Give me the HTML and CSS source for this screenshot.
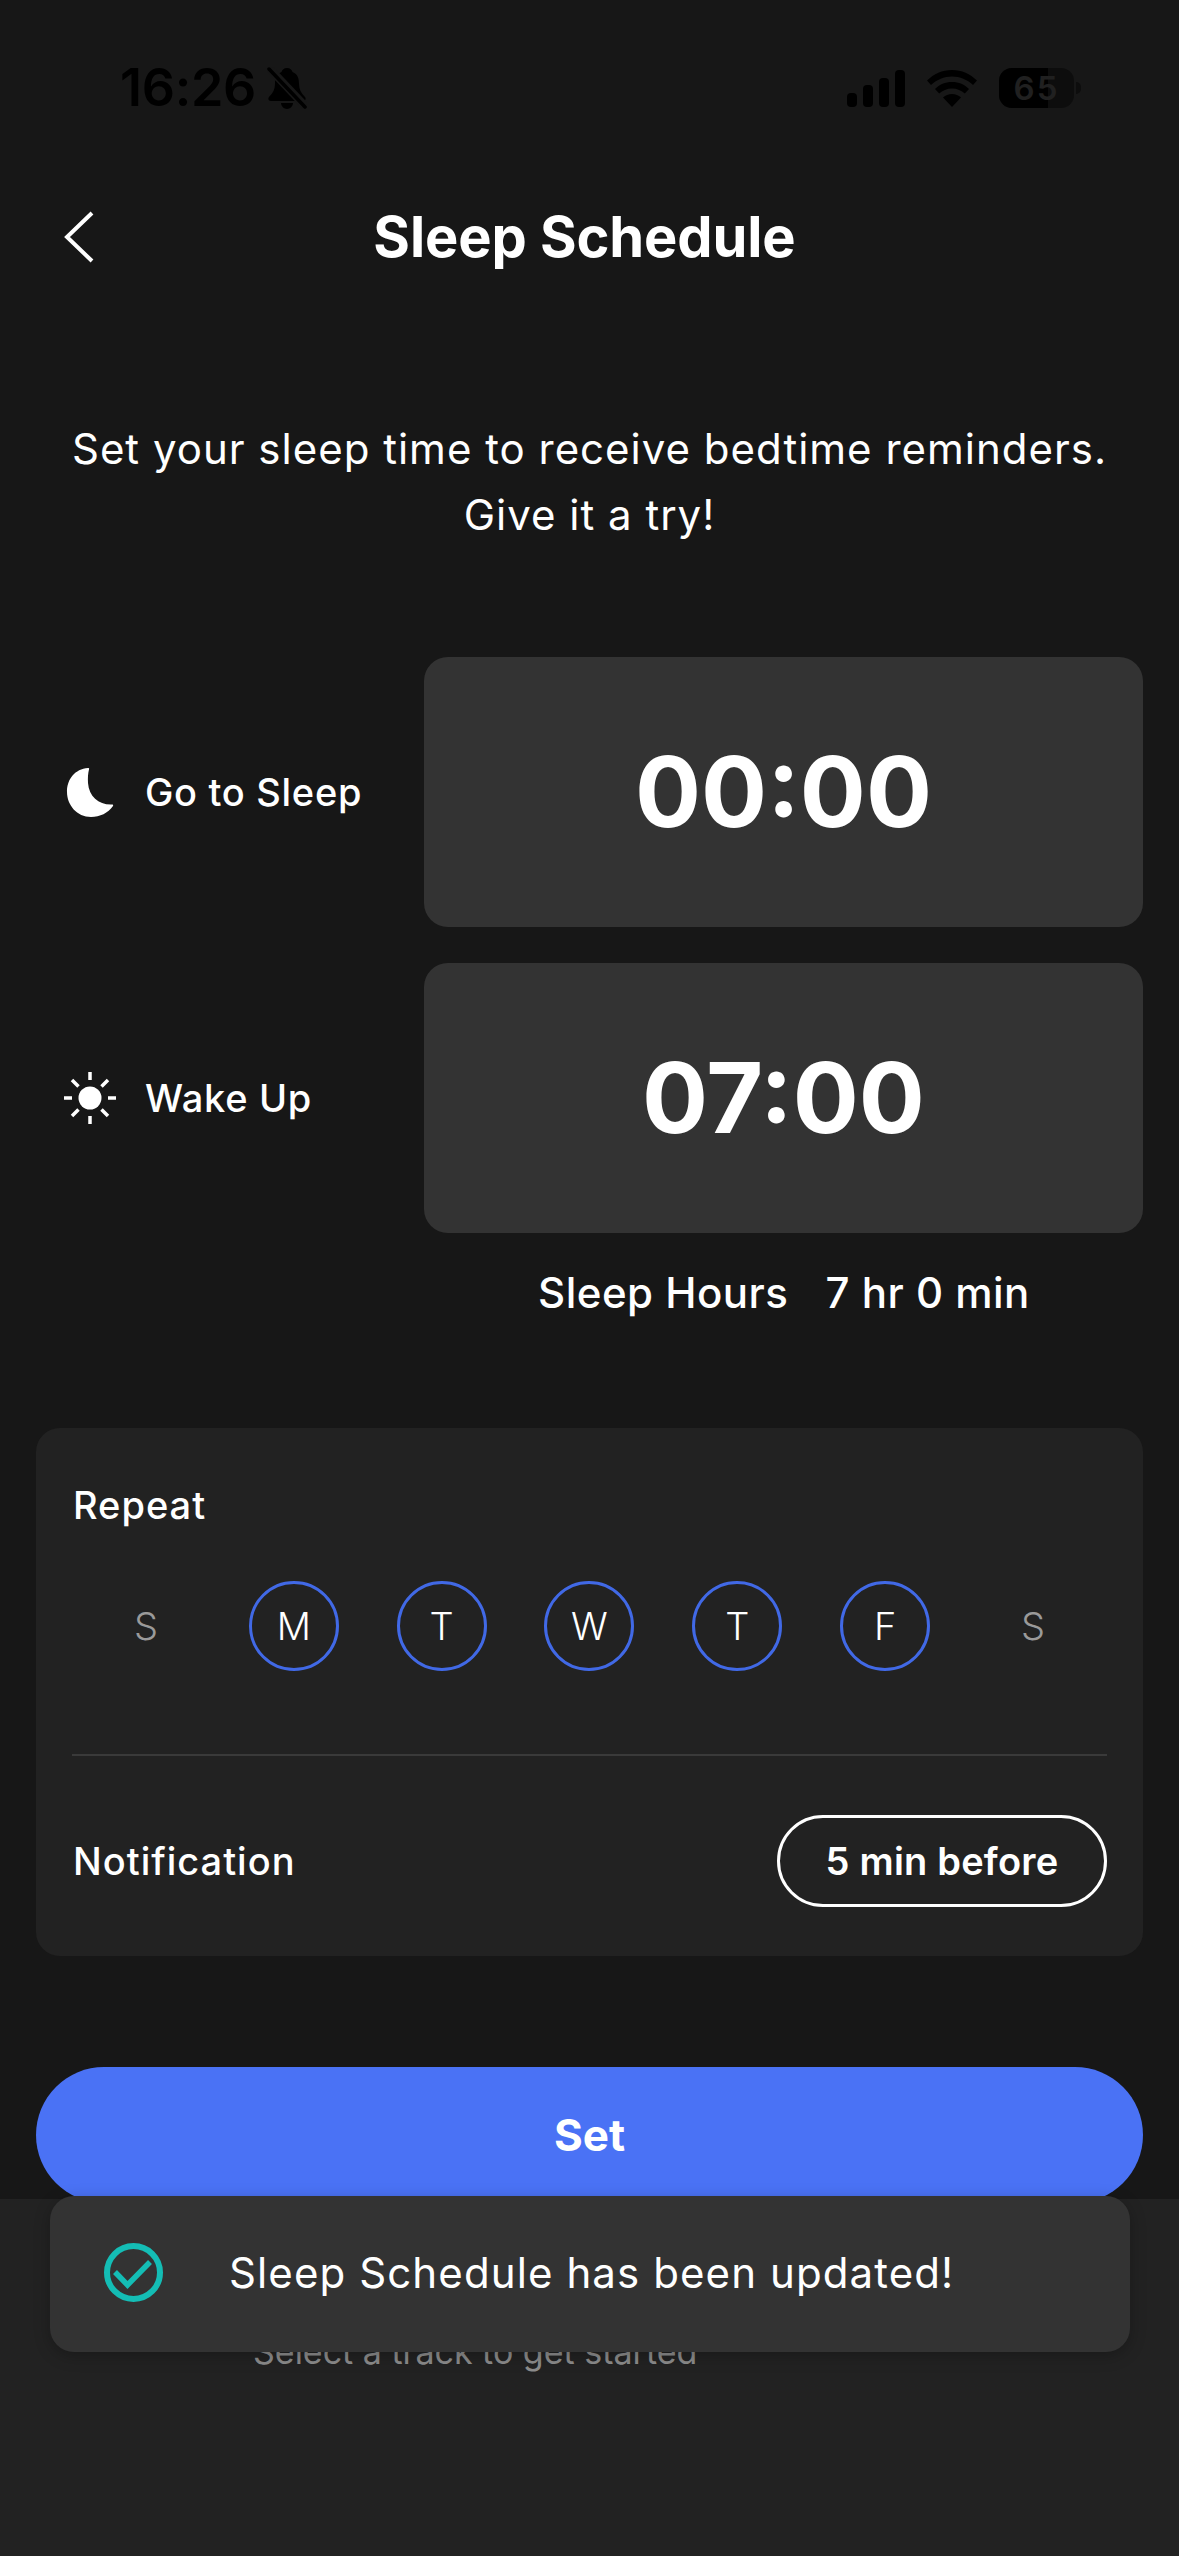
FILE: index.html
```html
<!DOCTYPE html>
<html lang="en">
<head>
    <meta charset="UTF-8">
    <meta name="viewport" content="width=device-width, initial-scale=1.0">
    <title>Sleep Schedule</title>
    <link rel="stylesheet" href="styles.css">
</head>
<body>
    <div class="app">
        <div class="status-bar">
            <div class="status-left">
                <span class="status-time">16:26</span>
                <svg class="bell" width="40" height="42" viewBox="0 0 40 42">
                    <path d="M20 1c-3 0-5 2-5.500 4C9 7 8 12 8 17c0 5-2 9-6 13-1 1-1 4 2 4h32c3 0 3-3 2-4-4-4-6-8-6-13 0-5-1-10-6.500-12C25 3 23 1 20 1z"/>
                    <path d="M14 36h12c0 3-3 6-6 6s-6-3-6-6z"/>
                    <path d="M3 2 38 39" stroke="#171717" stroke-width="8" fill="none"/>
                    <path d="M2 2 38 40" stroke="#000" stroke-width="3.500" stroke-linecap="round" fill="none"/>
                </svg>
            </div>
            <div class="status-right">
                <svg width="58" height="37" viewBox="0 0 58 37">
                    <rect x="0" y="23" width="10" height="14" rx="4"/>
                    <rect x="16" y="15" width="10" height="22" rx="4"/>
                    <rect x="32" y="8" width="10" height="29" rx="4"/>
                    <rect x="48" y="0" width="10" height="37" rx="4"/>
                </svg>
                <svg width="50" height="37" viewBox="0 0 50 37">
                    <path d="M25 0C15 0 7 4 0 10.500l4 4.500C10 9.500 17 6.500 25 6.500S40 9.500 46 15l4-4.500C43 4 35 0 25 0z"/>
                    <path d="M25 12c-7 0-12.500 2.500-17 7l4.200 4.500C15.500 20.500 20 18.500 25 18.500s9.500 2 12.800 5L42 19c-4.500-4.500-10-7-17-7z"/>
                    <path d="M25 24c-3.500 0-6.500 1.200-9 3.500L25 37l9-9.500C31.500 25.200 28.500 24 25 24z"/>
                </svg>
                <div class="battery">
                    <div class="battery-body">
                        <div class="battery-fill"></div>
                        <span class="battery-level">65</span>
                    </div>
                    <div class="battery-tip"></div>
                </div>
            </div>
        </div>

        <div class="header">
            <svg class="back" width="30" height="52" viewBox="0 0 30 52">
                <path d="M28 2 3 26l25 24" fill="none" stroke="#fff" stroke-width="4"/>
            </svg>
            <h1>Sleep Schedule</h1>
        </div>

        <p class="intro">Set your sleep time to receive bedtime reminders.<br>Give it a try!</p>

        <div class="time-rows">
            <div class="time-row">
                <div class="time-label">
                    <svg class="time-icon" width="52" height="52" viewBox="0 0 52 52">
                        <path d="M24 2C11 3 3 13 3 26c0 13 10 25 24 25 9 0 17-4 22-11 .500-1 0-1.500-1-1.500C35 39 25 31 24 17c-.300-5 0-10 1-13.500C25.500 2.500 25 2 24 2z" fill="#fff"/>
                    </svg>
                    <span>Go to Sleep</span>
                </div>
                <div class="time-card">00:00</div>
            </div>
            <div class="time-row">
                <div class="time-label">
                    <svg class="time-icon" width="52" height="52" viewBox="0 0 52 52">
                        <circle cx="26" cy="26" r="11.500" fill="#fff"/>
                        <path d="M26 0v8M26 44v8M0 26h8M44 26h8M8 8l6.500 6.500M37.500 37.500 44 44M8 44l6.500-6.500M37.500 14.500 44 8" stroke="#fff" stroke-width="3.500" fill="none"/>
                    </svg>
                    <span>Wake Up</span>
                </div>
                <div class="time-card">07:00</div>
            </div>
        </div>

        <div class="sleep-hours">
            <span>Sleep Hours</span>
            <span>7 hr 0 min</span>
        </div>

        <div class="settings">
            <div class="settings-title">Repeat</div>
            <div class="days">
                <div class="day">S</div>
                <div class="day active">M</div>
                <div class="day active">T</div>
                <div class="day active">W</div>
                <div class="day active">T</div>
                <div class="day active">F</div>
                <div class="day">S</div>
            </div>
            <div class="divider"></div>
            <div class="notify-row">
                <div class="settings-title">Notification</div>
                <div class="pill">5 min before</div>
            </div>
        </div>

        <button class="set-btn" type="button">Set</button>

        <div class="footer">
            <span class="footer-text">Select a track to get started</span>
        </div>

        <div class="toast">
            <svg width="59" height="59" viewBox="0 0 59 59">
                <circle cx="29.500" cy="29.500" r="26.500" fill="none" stroke="#14bdb5" stroke-width="6"/>
                <path d="M11 29l12.500 13L46 19" fill="none" stroke="#14bdb5" stroke-width="5.500"/>
            </svg>
            <span>Sleep Schedule has been updated!</span>
        </div>
    </div>
</body>
</html>
```

FILE: styles.css
```css
:root {
    --bg-color: #171717;
    --panel-color: #222222;
    --card-color: #333333;
    --primary-color: #4a72f5;
    --ring-color: #4169e6;
    --muted-color: #8c8c8c;
}

* {
    box-sizing: border-box;
    margin: 0;
    padding: 0;
    font-family: 'Inter', 'Liberation Sans', sans-serif;
}

body {
    background-color: var(--bg-color);
    color: #fff;
}

.app {
    width: 1179px;
    height: 2556px;
    display: flex;
    flex-direction: column;
    position: relative;
    overflow: hidden;
    background-color: var(--bg-color);
}

/* status bar is black on dark, it was captured that way */
.status-bar {
    height: 176px;
    flex-shrink: 0;
    display: flex;
    justify-content: space-between;
    align-items: center;
    padding: 0 98px 0 120px;
    color: #000;
}

.status-left {
    display: flex;
    align-items: center;
    gap: 11px;
}

.status-time {
    font-size: 52px;
    font-weight: 600;
    line-height: 52px;
    letter-spacing: -0.3px;
}

.status-right {
    display: flex;
    align-items: center;
    gap: 22px;
}

.battery {
    display: flex;
    align-items: center;
    gap: 2px;
}

.battery-body {
    width: 75px;
    height: 40px;
    border-radius: 13px;
    background: #0d0d0d;
    position: relative;
    overflow: hidden;
    display: flex;
    justify-content: center;
    align-items: center;
}

.battery-fill {
    position: absolute;
    left: 0;
    top: 0;
    bottom: 0;
    width: 49px;
    background: #000;
}

.battery-level {
    position: relative;
    font-size: 33px;
    font-weight: 600;
    letter-spacing: 2px;
    color: #202020;
}

.battery-tip {
    width: 5px;
    height: 12px;
    background: #0d0d0d;
    border-radius: 0 6px 6px 0;
}

.header {
    height: 122px;
    flex-shrink: 0;
    display: flex;
    align-items: center;
    justify-content: center;
    position: relative;
    padding-right: 10px;
}

.back {
    position: absolute;
    left: 64px;
    top: 35px;
}

h1 {
    font-size: 56px;
    font-weight: 700;
    line-height: 62px;
    letter-spacing: -0.1px;
}

.intro {
    margin-top: 118px;
    text-align: center;
    font-size: 42px;
    line-height: 66px;
    letter-spacing: 1px;
}

.time-rows {
    margin-top: 109px;
    display: flex;
    flex-direction: column;
    gap: 36px;
    padding: 0 36px 0 64px;
}

.time-row {
    display: flex;
    align-items: center;
}

.time-label {
    flex: 1;
    display: flex;
    align-items: center;
    gap: 29px;
    font-size: 38px;
    font-weight: 500;
    letter-spacing: 0.7px;
}

.time-card {
    width: 719px;
    height: 270px;
    padding-bottom: 2px;
    border-radius: 24px;
    background: var(--card-color);
    display: flex;
    justify-content: center;
    align-items: center;
    font-size: 98px;
    font-weight: 700;
}

.sleep-hours {
    margin-top: 36px;
    padding-left: 538px;
    display: flex;
    gap: 37px;
    font-size: 42px;
    font-weight: 500;
    line-height: 48px;
    letter-spacing: 0.5px;
}

.settings {
    margin: 111px 36px 0;
    padding: 54px 36px 49px;
    background: var(--panel-color);
    border-radius: 24px;
}

.settings-title {
    font-size: 38px;
    font-weight: 500;
    line-height: 46px;
    letter-spacing: 1px;
    margin-left: 1px;
}

.days {
    margin-top: 53px;
    display: grid;
    grid-template-columns: repeat(7, 1fr);
    justify-items: center;
}

.day {
    width: 90px;
    height: 90px;
    border-radius: 50%;
    display: flex;
    justify-content: center;
    align-items: center;
    font-size: 38px;
    font-weight: 300;
    color: #9a9a9a;
}

.day.active {
    border: 3.500px solid var(--ring-color);
    color: #fff;
}

.divider {
    margin-top: 83px;
    height: 2px;
    background: #3a3a3a;
}

.notify-row {
    margin-top: 59px;
    display: flex;
    justify-content: space-between;
    align-items: center;
}

.pill {
    width: 330px;
    height: 92px;
    border: 3px solid #fff;
    border-radius: 46px;
    display: flex;
    justify-content: center;
    align-items: center;
    font-size: 38px;
    font-weight: 600;
    letter-spacing: 0.2px;
}

.set-btn {
    margin: 111px 36px 0;
    height: 136px;
    flex-shrink: 0;
    border: none;
    border-radius: 68px;
    background: var(--primary-color);
    color: #fff;
    font-size: 44px;
    font-weight: 700;
}

.footer {
    flex: 1;
    margin-top: -4px;
    background: var(--panel-color);
    padding: 132px 0 0 253px;
}

.footer-text {
    font-size: 34px;
    line-height: 42px;
    color: var(--muted-color);
}

.toast {
    position: absolute;
    left: 50px;
    top: 2196px;
    width: 1080px;
    height: 156px;
    border-radius: 24px;
    background: var(--card-color);
    box-shadow: 0 4px 16px rgba(0, 0, 0, 0.25);
    display: flex;
    align-items: center;
    gap: 66px;
    padding: 0 0 4px 54px;
    font-size: 42px;
    letter-spacing: 1.1px;
}
```
